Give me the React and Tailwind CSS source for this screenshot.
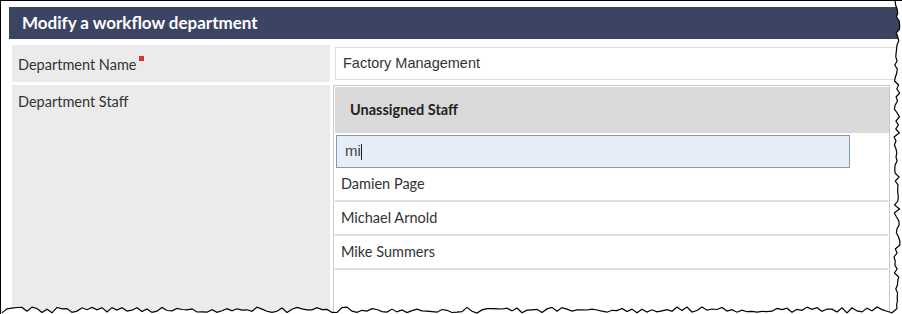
import React from 'react';

const staff = ['Damien Page', 'Michael Arnold', 'Mike Summers'];

// deterministic jitter for the torn paper edge
const jitter = (i, amp) => {
  const v = Math.sin(i * 12.9898 + 78.233) * 43758.5453;
  return (v - Math.floor(v)) * amp;
};

const TornEdge = () => {
  const pts = [];
  for (let y = 0; y <= 306; y += 4) pts.push([893 + jitter(y, 6), y]);
  for (let x = 896; x >= 0; x -= 5) pts.push([x, 306 + jitter(x + 1000, 6)]);
  const line = pts.map(([x, y], i) => `${i ? 'L' : 'M'}${x.toFixed(1)} ${y.toFixed(1)}`).join(' ');
  const fill = `${line} L0 314 L902 314 L902 0 Z`;
  return (
    <svg className="absolute inset-0 pointer-events-none" width="902" height="314" viewBox="0 0 902 314">
      <path d={fill} fill="#ffffff" />
      <path d={line} fill="none" stroke="#000000" strokeWidth="1.2" />
    </svg>
  );
};

export default function App() {
  return (
    <div className="relative w-[902px] h-[314px] overflow-hidden bg-white border-l border-t border-black font-['Lato','Liberation_Sans',sans-serif] text-[14px] text-[#333]">
      <div className="ml-[8px] mt-[6px] h-[32px] bg-[#3b4563] pl-[13px] flex items-center text-white font-bold text-[17px]">
        Modify a workflow department
      </div>

      <div className="ml-[11px] mt-[6px] flex flex-col gap-[3px]">
        <div className="flex h-[37px]">
          <div className="w-[318px] shrink-0 bg-[#ebebeb] pl-[6px] pt-[9px] text-[14.5px]">
            Department Name<span className="inline-block w-[5px] h-[5px] bg-[#e03030] ml-[2px] align-top mt-[2px]"></span>
          </div>
          <div className="ml-[5px] pt-[2px] shrink-0">
            <div className="w-[600px] h-[33px] border border-[#dddddd] bg-white pl-[7px] flex items-center font-['Liberation_Sans',sans-serif] text-[14.5px] text-[#333]">
              Factory Management
            </div>
          </div>
        </div>

        <div className="flex h-[230px]">
          <div className="w-[318px] shrink-0 bg-[#ebebeb] pl-[6px] pt-[6px] text-[14.5px]">Department Staff</div>
          <div className="ml-[3px] w-[557px] shrink-0 border border-[#c8c8c8] border-b-0 pl-[1px] pt-[1px]">
            <div className="h-[46px] bg-[#dadada] pl-[15px] flex items-center font-bold text-[14.5px] text-[#222]">
              Unassigned Staff
            </div>
            <div className="pt-[2px] pl-[1px]">
              <div className="w-[514px] h-[33px] bg-[#e6edf7] border border-[#7f9bb3] pl-[8px] flex items-center font-['Liberation_Sans',sans-serif] text-[15px] text-[#444]">
                mi<span className="inline-block w-[1px] h-[16px] bg-[#222]"></span>
              </div>
            </div>
            <div className="w-[553px]">
              {staff.map((name) => (
                <div key={name} className="h-[34px] border-b-2 border-[#dedede] pl-[6px] flex items-center text-[14.5px] text-[#333]">
                  {name}
                </div>
              ))}
            </div>
          </div>
        </div>
      </div>

      <TornEdge />
    </div>
  );
}
